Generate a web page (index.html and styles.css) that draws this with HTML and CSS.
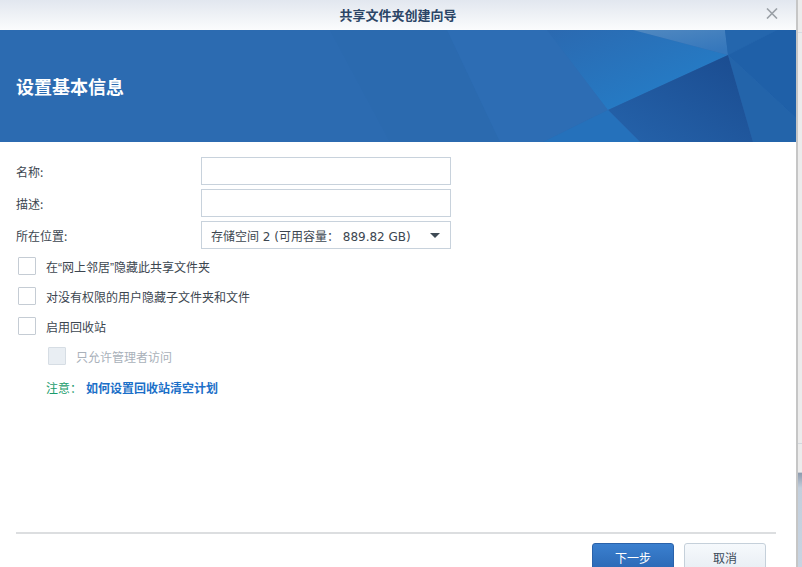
FILE: index.html
```html
<!DOCTYPE html>
<html lang="zh-CN">
<head>
<meta charset="utf-8">
<title>共享文件夹创建向导</title>
<link rel="stylesheet" href="styles.css">
</head>
<body>
<div class="screen">
  <div class="window">
    <header class="titlebar">
      <span></span>
      <span class="title">共享文件夹创建向导</span>
      <svg class="close" width="12" height="11" viewBox="0 0 12 11"><path d="M1 0.5 L11 10.5 M11 0.5 L1 10.5" stroke="#9aa0a6" stroke-width="1.6" fill="none"/></svg>
    </header>
    <section class="banner">
      <svg class="banner-art" viewBox="0 0 796 112" preserveAspectRatio="none">
        <defs>
          <linearGradient id="g1" x1="0" y1="0" x2="1" y2="1">
            <stop offset="0" stop-color="#2b69b0"/>
            <stop offset="1" stop-color="#2382cd"/>
          </linearGradient>
          <linearGradient id="g2" x1="0" y1="0" x2="0.6" y2="1">
            <stop offset="0" stop-color="#5088c0"/>
            <stop offset="1" stop-color="#3577bc"/>
          </linearGradient>
          <linearGradient id="g3" x1="1" y1="0" x2="0" y2="1">
            <stop offset="0" stop-color="#1a4b8f"/>
            <stop offset="1" stop-color="#2563ab"/>
          </linearGradient>
        </defs>
        <rect width="796" height="112" fill="#2c6bb1"/>
        <polygon points="330,0 447,0 500,112 390,112" fill="#2b6aaf"/>
        <polygon points="447,0 547,0 608,80 543,112 500,112" fill="#2d6db4"/>
        <polygon points="547,0 633,0 728,25 608,80" fill="url(#g1)"/>
        <polygon points="633,0 725,0 728,25" fill="url(#g2)"/>
        <polygon points="725,0 777,0 728,25" fill="#2466ad"/>
        <polygon points="777,0 796,0 796,88 728,25" fill="#1f60a8"/>
        <polygon points="728,25 796,88 796,112 753,112" fill="#2364aa"/>
        <polygon points="728,25 753,112 640,112 608,80" fill="url(#g3)"/>
        <polygon points="608,80 640,112 543,112" fill="#2571bb"/>
      </svg>
      <h1 class="banner-title">设置基本信息</h1>
    </section>
    <main class="content">
      <div class="form">
        <div class="field"><span class="label">名称:</span><div class="input"></div></div>
        <div class="field"><span class="label">描述:</span><div class="input"></div></div>
        <div class="field"><span class="label">所在位置:</span>
          <div class="input select"><span class="select-text">存储空间 2 (可用容量： 889.82 GB)</span><span class="caret"></span></div>
        </div>
      </div>
      <div class="checks">
        <div class="check"><span class="box"></span><span>在<span class="q">“</span>网上邻居<span class="q">”</span>隐藏此共享文件夹</span></div>
        <div class="check"><span class="box"></span><span>对没有权限的用户隐藏子文件夹和文件</span></div>
        <div class="check"><span class="box"></span><span>启用回收站</span></div>
        <div class="check sub disabled"><span class="box"></span><span>只允许管理者访问</span></div>
        <div class="note"><span class="note-label">注意：</span><a class="note-link">如何设置回收站清空计划</a></div>
      </div>
    </main>
    <footer class="footer">
      <div class="sep"></div>
      <div class="buttons">
        <button class="btn primary">下一步</button>
        <button class="btn">取消</button>
      </div>
    </footer>
  </div>
  <div class="strip">
    <div class="strip-top"></div>
    <div class="strip-mid"></div>
    <div class="strip-low"></div>
    <div class="strip-bottom"></div>
  </div>
</div>
</body>
</html>
```

FILE: styles.css
```css
html, body {
  margin: 0;
  padding: 0;
  height: 567px;
  overflow: hidden;
  background: #ffffff;
}
body {
  font-family: "Noto Sans CJK SC", "Noto Sans", "Liberation Sans", sans-serif;
  font-size: 12px;
  color: #3c4650;
}
.screen {
  display: flex;
  width: 802px;
  height: 567px;
}
.window {
  width: 796px;
  height: 580px;
  display: flex;
  flex-direction: column;
  background: #ffffff;
  flex: none;
}
.titlebar {
  height: 30px;
  display: grid;
  grid-template-columns: 1fr auto 1fr;
  align-items: center;
  background: linear-gradient(#e2e7ef, #fbfcfd);
  flex: none;
}
.title {
  font-size: 13px;
  font-weight: bold;
  color: #2b4566;
  line-height: 30px;
}
.close {
  justify-self: end;
  margin-right: 18px;
  margin-top: -4px;
}
.banner {
  position: relative;
  height: 112px;
  display: flex;
  align-items: center;
  background: #2c6bb1;
  overflow: hidden;
  flex: none;
}
.banner-art {
  position: absolute;
  left: 0;
  top: 0;
  width: 796px;
  height: 112px;
}
.banner-title {
  position: relative;
  margin: 0 0 0 16px;
  font-size: 18px;
  font-weight: bold;
  color: #ffffff;
  line-height: 24px;
}
.content {
  flex: 1;
  padding: 15px 0 0 16px;
}
.form {
  display: flex;
  flex-direction: column;
  gap: 4px;
}
.field {
  display: flex;
  align-items: center;
  height: 28px;
}
.label {
  width: 185px;
  flex: none;
}
.input {
  width: 248px;
  height: 26px;
  border: 1px solid #c8d2dc;
  background: #ffffff;
}
.select {
  display: flex;
  align-items: center;
  justify-content: space-between;
  padding: 0 10px 0 9px;
  width: 229px;
}
.select-text {
  font-family: "DejaVu Sans", "Noto Sans CJK SC", sans-serif;
  font-size: 12px;
  color: #3c4650;
  white-space: nowrap;
}
.caret {
  width: 0;
  height: 0;
  border-left: 5px solid transparent;
  border-right: 5px solid transparent;
  border-top: 5px solid #3f4a55;
}
.q {
  font-family: "Liberation Sans", sans-serif;
}
.checks {
  margin-top: 8px;
  display: flex;
  flex-direction: column;
  gap: 12px;
}
.check {
  display: flex;
  align-items: center;
  height: 18px;
  gap: 10px;
}
.box {
  width: 16px;
  height: 16px;
  border: 1px solid #c5ccd4;
  border-radius: 1px;
  background: #ffffff;
  margin-left: 2px;
  flex: none;
}
.check.sub {
  padding-left: 30px;
}
.check.disabled {
  color: #a9b1ba;
}
.check.disabled .box {
  background: #e9eef3;
  border-color: #d6dde4;
}
.note {
  margin-top: 1px;
  padding-left: 30px;
  height: 18px;
  display: flex;
  align-items: center;
}
.note-label {
  color: #1a9c6c;
  width: 40px;
}
.note-link {
  color: #1b6fc8;
  font-weight: bold;
}
.footer {
  flex: none;
  padding: 0 20px 9px 16px;
}
.sep {
  height: 2px;
  background: #dcdee0;
}
.buttons {
  display: flex;
  justify-content: flex-end;
  gap: 10px;
  padding: 9px 10px 0 0;
}
.btn {
  width: 82px;
  height: 28px;
  border: 1px solid #c5d0da;
  border-radius: 3px;
  background: linear-gradient(#f6f9fc, #e8eef4);
  color: #3a4a5a;
  font-family: "Noto Sans CJK SC", "Noto Sans", sans-serif;
  font-size: 12px;
  padding: 0;
}
.btn.primary {
  border-color: #2a62aa;
  background: linear-gradient(#3b80cf, #2a68b5);
  color: #ffffff;
}
.strip {
  width: 6px;
  flex: none;
  display: flex;
  flex-direction: column;
  border-left: 2px solid #c6c6c6;
  background: #ececec;
}
.strip-top {
  height: 32px;
  border-bottom: 1px solid #d7dde4;
}
.strip-mid {
  height: 410px;
  border-bottom: 1px solid #d3d8de;
}
.strip-low {
  height: 28px;
  border-bottom: 1px solid #c9ced4;
}
.strip-bottom {
  flex: 1;
  background: linear-gradient(#8d9bae, #c3cfdc 15px, #c8d4e2);
}
```
